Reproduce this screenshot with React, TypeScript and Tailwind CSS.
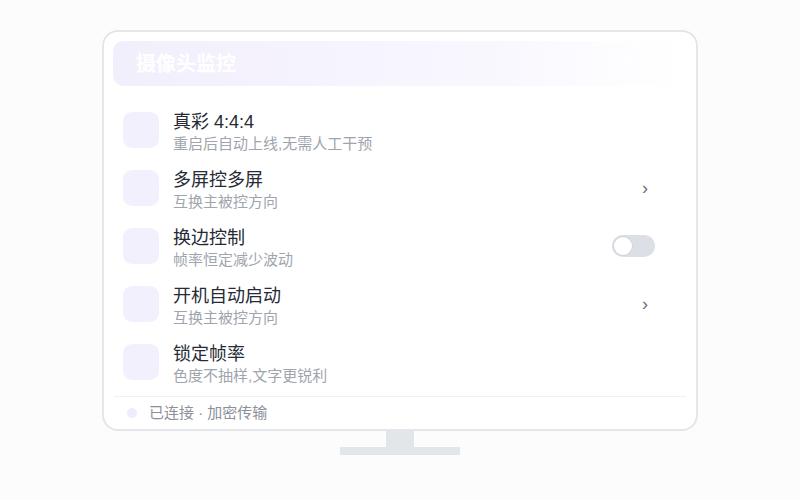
import React from 'react';

type Row = {
  title: string;
  desc: string;
  action?: 'chevron' | 'toggle';
};

const ROWS: Row[] = [
  { title: '真彩 4:4:4', desc: '重启后自动上线,无需人工干预' },
  { title: '多屏控多屏', desc: '互换主被控方向', action: 'chevron' },
  { title: '换边控制', desc: '帧率恒定减少波动', action: 'toggle' },
  { title: '开机自动启动', desc: '互换主被控方向', action: 'chevron' },
  { title: '锁定帧率', desc: '色度不抽样,文字更锐利' },
];

function Toggle() {
  return (
    <div className="flex h-[22px] w-[43px] items-center rounded-full bg-[#dcdfe5] p-[2px]">
      <div className="h-[18px] w-[18px] rounded-full bg-white shadow-[0_0_0_1px_#d1d5db]" />
    </div>
  );
}

function SettingRow({ row }: { row: Row }) {
  return (
    <div className="flex h-[58px] items-start pl-[10px] pr-[32px]">
      <div className="mt-[9px] h-9 w-9 shrink-0 rounded-[9px] bg-[#f3f0fe]" />
      <div className="ml-[14px] mt-[9px] flex-1">
        <div className="text-[18px] leading-5 text-[#262b35]">{row.title}</div>
        <div className="mt-[2px] text-[15px] leading-5 text-[#a0a5ad]">{row.desc}</div>
      </div>
      <div className="mt-[9px] flex h-9 items-center">
        {row.action === 'chevron' && (
          <div className="flex w-5 justify-center text-[18px] leading-none text-[#6b7280]">›</div>
        )}
        {row.action === 'toggle' && <Toggle />}
      </div>
    </div>
  );
}

export default function App() {
  return (
    <div
      className="flex h-[500px] w-[800px] flex-col items-center bg-[#fcfcfd] pt-[30px]"
      style={{ fontFamily: '"Liberation Sans", "Noto Sans CJK SC", sans-serif' }}
    >
      <div className="flex h-[401px] w-[596px] flex-col rounded-[16px] border-2 border-[#e3e6ea] bg-white p-[9px] pb-0">
        <div className="relative flex h-[45px] items-center rounded-[10px] bg-gradient-to-r from-[#f2effd] via-[#f8f6fe] via-60% to-white pl-[23px]">
          <span className="text-[20px] font-bold leading-none text-white">摄像头监控</span>
          <div className="absolute left-[509px] top-[17px] flex gap-[8px]">
            <span className="h-[10px] w-[10px] rounded-full bg-white/40" />
            <span className="h-[10px] w-[10px] rounded-full bg-white/40" />
            <span className="h-[10px] w-[10px] rounded-full bg-white/40" />
          </div>
        </div>
        <div className="mt-[17px] flex flex-col">
          {ROWS.map((r) => (
            <SettingRow key={r.title + r.desc} row={r} />
          ))}
        </div>
        <div className="mx-[1px] mt-[3px] h-px bg-[#eef0f3]" />
        <div className="flex h-[32px] items-center pl-[14px]">
          <span className="h-[10px] w-[10px] rounded-full bg-[#efecfd]" />
          <span className="ml-[12px] text-[15px] text-[#8b909a]">已连接 · 加密传输</span>
        </div>
      </div>
      <div className="h-[16px] w-[28px] bg-[#e2e5e9]" />
      <div className="h-[8px] w-[120px] bg-[#e2e5e9]" />
    </div>
  );
}
